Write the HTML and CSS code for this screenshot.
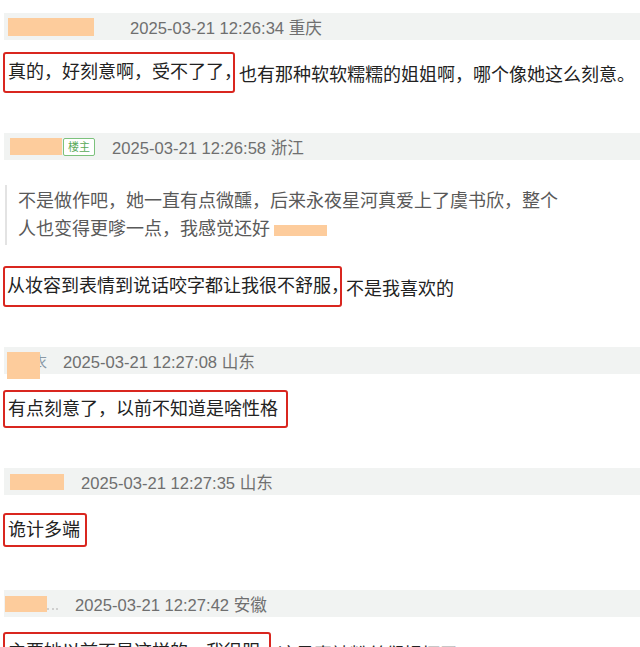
FILE: index.html
```html
<!DOCTYPE html>
<html lang="zh-CN">
<head>
    <meta charset="UTF-8">
    <meta name="viewport" content="width=device-width, initial-scale=1.0">
    <title>评论</title>
    <link rel="stylesheet" href="styles.css">
</head>
<body>
    <div class="thread">

        <!-- 1 -->
        <div class="comment">
            <div class="meta">
                <span class="nick nick-1"></span>
                <span class="time time-far">2025-03-21 12:26:34 重庆</span>
            </div>
            <div class="text mt-12">
                <span class="mark mark-tight">真的，好刻意啊，受不了了<span class="half">，</span></span>
                <span class="rest">也有那种软软糯糯的姐姐啊，哪个像她这么刻意。</span>
            </div>
        </div>

        <!-- 2 (楼主) -->
        <div class="comment">
            <div class="meta">
                <span class="nick nick-2"></span>
                <span class="badge">楼主</span>
                <span class="time">2025-03-21 12:26:58 浙江</span>
            </div>
            <div class="quote">
                不是做作吧，她一直有点微醺，后来永夜星河真爱上了虞书欣，整个<br>
                人也变得更嗲一点，我感觉还好<span class="blur-inline"></span>
            </div>
            <div class="text mt-21">
                <span class="mark mark-flat">从妆容到表情到说话咬字都让我很不舒服<span class="half">，</span></span>
                <span class="rest">不是我喜欢的</span>
            </div>
        </div>

        <!-- 3 -->
        <div class="comment">
            <div class="meta">
                <span class="nick nick-3"></span>
                <span class="ghost">衣</span>
                <span class="time">2025-03-21 12:27:08 山东</span>
            </div>
            <div class="text mt-16">
                <span class="mark mark-mid mark-wide">有点刻意了，以前不知道是啥性格</span>
            </div>
        </div>

        <!-- 4 -->
        <div class="comment comment-loose">
            <div class="meta">
                <span class="nick nick-4"></span>
                <span class="time">2025-03-21 12:27:35 山东</span>
            </div>
            <div class="text mt-18">
                <span class="mark mark-low">诡计多端</span>
            </div>
        </div>

        <!-- 5 -->
        <div class="comment">
            <div class="meta">
                <span class="nick nick-5"></span>
                <span class="trail"></span>
                <span class="time">2025-03-21 12:27:42 安徽</span>
            </div>
            <div class="text mt-15">
                <span class="mark mark-tight">主要她以前不是这样的，我很服<span class="half">，</span></span>
                <span class="rest rest-far">这是真被粉丝们惯坏了</span>
            </div>
        </div>

    </div>
</body>
</html>
```

FILE: styles.css
```css
body {
    margin: 0;
    background: #fff;
    font-family: "Liberation Sans", "Noto Sans CJK SC", sans-serif;
    overflow: hidden;
}

.thread {
    padding: 13px 0 0 3px;
}

.comment {
    margin-bottom: 40px;
}

.comment-loose {
    margin-bottom: 43px;
}

/* grey header bar with nickname + time */
.meta {
    display: flex;
    align-items: center;
    height: 27px;
    margin-left: 1px;
    padding-left: 4px;
    background: #f1f3f2;
    font-size: 16.6px;
    color: #6f6f6f;
}

.nick {
    height: 18px;
    background: #fdcc9c;
    flex: none;
}

.nick-1 { width: 86px; }
.nick-2 { width: 52px; margin-left: 2px; height: 17px; }
.nick-3 {
    width: 33px;
    height: 27px;
    margin-left: -1px;
    align-self: flex-start;
    margin-top: 5px;
    position: relative;
    z-index: 1;
}
.nick-4 { width: 54px; height: 16px; margin-left: 2px; }
.nick-5 { width: 42px; height: 16px; margin-left: -3px; }

.trail {
    width: 11px;
    height: 0;
    margin-top: 10px;
    border-bottom: 2px dotted #cfcfcf;
}

/* half hidden nickname glyph peeking out of the blur */
.ghost {
    margin-left: -8px;
    color: #8a99a6;
    font-size: 15px;
}

.badge {
    margin-left: 1px;
    padding: 0 4px;
    height: 16px;
    line-height: 16px;
    border: 1px solid #7cc27c;
    border-radius: 2px;
    background: #fff;
    color: #5aaa5a;
    font-size: 11px;
}

.time {
    margin-left: 17px;
}

.ghost + .time {
    margin-left: 16px;
}

.time-far {
    margin-left: 36px;
}

/* comment body */
.text {
    display: flex;
    align-items: center;
    font-size: 18px;
    color: #222;
    white-space: nowrap;
}

.mt-12 { margin-top: 12px; }
.mt-15 { margin-top: 15px; }
.mt-16 { margin-top: 16px; }
.mt-18 { margin-top: 18px; }
.mt-21 { margin-top: 21px; }

/* red annotation box */
.mark {
    border: 2px solid #d9261f;
    border-radius: 3px;
    padding: 6px 2px 6px 3px;
    line-height: 25px;
}

.mark-tight { padding-right: 0; }
.mark-flat { padding-left: 2px; padding-right: 0; }
.mark-mid { padding-top: 4.5px; padding-bottom: 4.5px; }
.mark-low { padding-top: 2.5px; padding-bottom: 2.5px; padding-right: 5px; }
.mark-wide { padding-right: 8px; }

.half {
    font-feature-settings: "halt";
}

.rest {
    margin-left: 4px;
}

.rest-far {
    margin-left: 7px;
}

/* quoted reply */
.quote {
    margin-top: 25px;
    margin-left: 2px;
    padding: 2px 0 2px 11px;
    border-left: 2px solid #e3e3e3;
    color: #595959;
    font-size: 18px;
    line-height: 28px;
    white-space: nowrap;
}

.blur-inline {
    display: inline-block;
    width: 53px;
    height: 11px;
    margin-left: 4px;
    background: #fdcc9c;
    vertical-align: middle;
}
```
